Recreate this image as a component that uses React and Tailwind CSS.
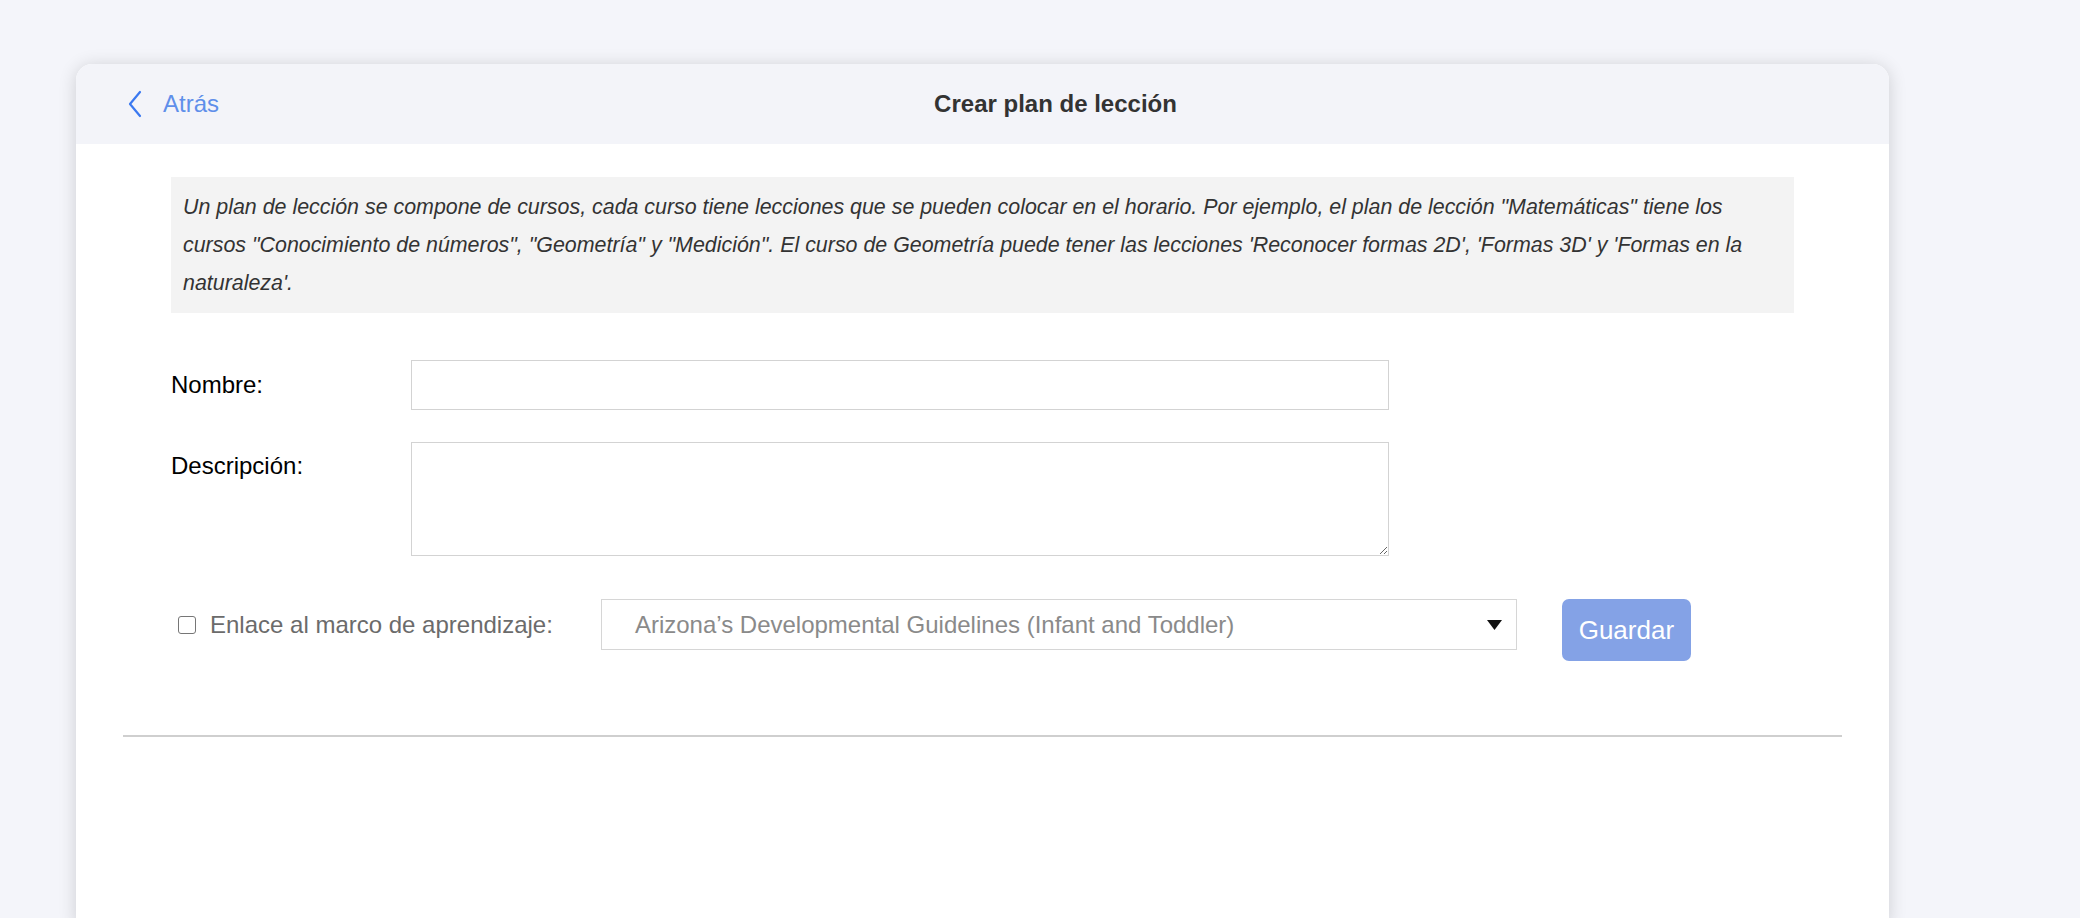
const App = () => {
  return (
    <div className="min-h-screen bg-[#f4f5fa] font-['Liberation_Sans',Arial,sans-serif] overflow-hidden">
      <div className="ml-[76px] mt-[64px] w-[1813px] h-[860px] bg-white rounded-t-[16px] shadow-[0_2px_18px_rgba(0,0,0,0.16)]">
        {/* Header */}
        <div className="h-[80px] bg-[#f3f4f9] rounded-t-[16px] flex items-center px-[51px]">
          <button className="w-[146px] flex items-center gap-[20px] text-[#5f8fea] text-[24px]">
            <svg width="16" height="28" viewBox="0 0 16 28" className="shrink-0">
              <path d="M13 2 L3 14 L13 26" stroke="#3a78f0" strokeWidth="2.2" fill="none" strokeLinecap="round" strokeLinejoin="round" />
            </svg>
            <span>Atrás</span>
          </button>
          <h1 className="flex-1 text-center text-[24px] font-bold text-[#333]">Crear plan de lección</h1>
        </div>

        {/* Body */}
        <div className="px-[95px] pt-[33px]">
          <p className="bg-[#f3f3f3] px-[12px] py-[11px] text-[21.4px] leading-[38px] italic text-[#333]">
            Un plan de lección se compone de cursos, cada curso tiene lecciones que se pueden colocar en el horario. Por ejemplo, el plan de lección "Matemáticas" tiene los cursos "Conocimiento de números", "Geometría" y "Medición". El curso de Geometría puede tener las lecciones 'Reconocer formas 2D', 'Formas 3D' y 'Formas en la naturaleza'.
          </p>

          <div className="mt-[47px] flex flex-col gap-[32px]">
            <div className="flex items-center">
              <label className="w-[240px] text-[24px] text-black">Nombre:</label>
              <input type="text" className="w-[978px] h-[50px] border border-[#d3d3d3] outline-none px-3 text-[22px]" />
            </div>
            <div className="flex items-start">
              <label className="w-[240px] text-[24px] text-black pt-[6px]">Descripción:</label>
              <textarea className="w-[978px] h-[114px] border border-[#d3d3d3] outline-none px-3 text-[22px] block" />
            </div>
          </div>

          <div className="mt-[43px] flex items-start">
            <label className="h-[51px] flex items-center gap-[14px] pl-[7px] text-[24px] text-[#6b6b6b]">
              <span className="w-[18px] h-[18px] border border-[#767676] rounded-[3px] bg-white"></span>
              Enlace al marco de aprendizaje:
            </label>
            <div className="ml-[48px] w-[916px] h-[51px] border border-[#d6d6d6] flex items-center justify-between pl-[33px] pr-[14px]">
              <span className="text-[24px] text-[#8a8a8a]">Arizona’s Developmental Guidelines (Infant and Toddler)</span>
              <svg width="15" height="10" viewBox="0 0 15 10">
                <path d="M0 0 L15 0 L7.5 10 Z" fill="#111" />
              </svg>
            </div>
            <button className="ml-[45px] w-[129px] h-[62px] rounded-[7px] bg-[#84a2e6] text-white text-[26px]">Guardar</button>
          </div>
        </div>

        <div className="mx-[47px] mt-[74px] h-[2px] bg-[#cfcfcf]"></div>
      </div>
    </div>
  );
};

export default App;
